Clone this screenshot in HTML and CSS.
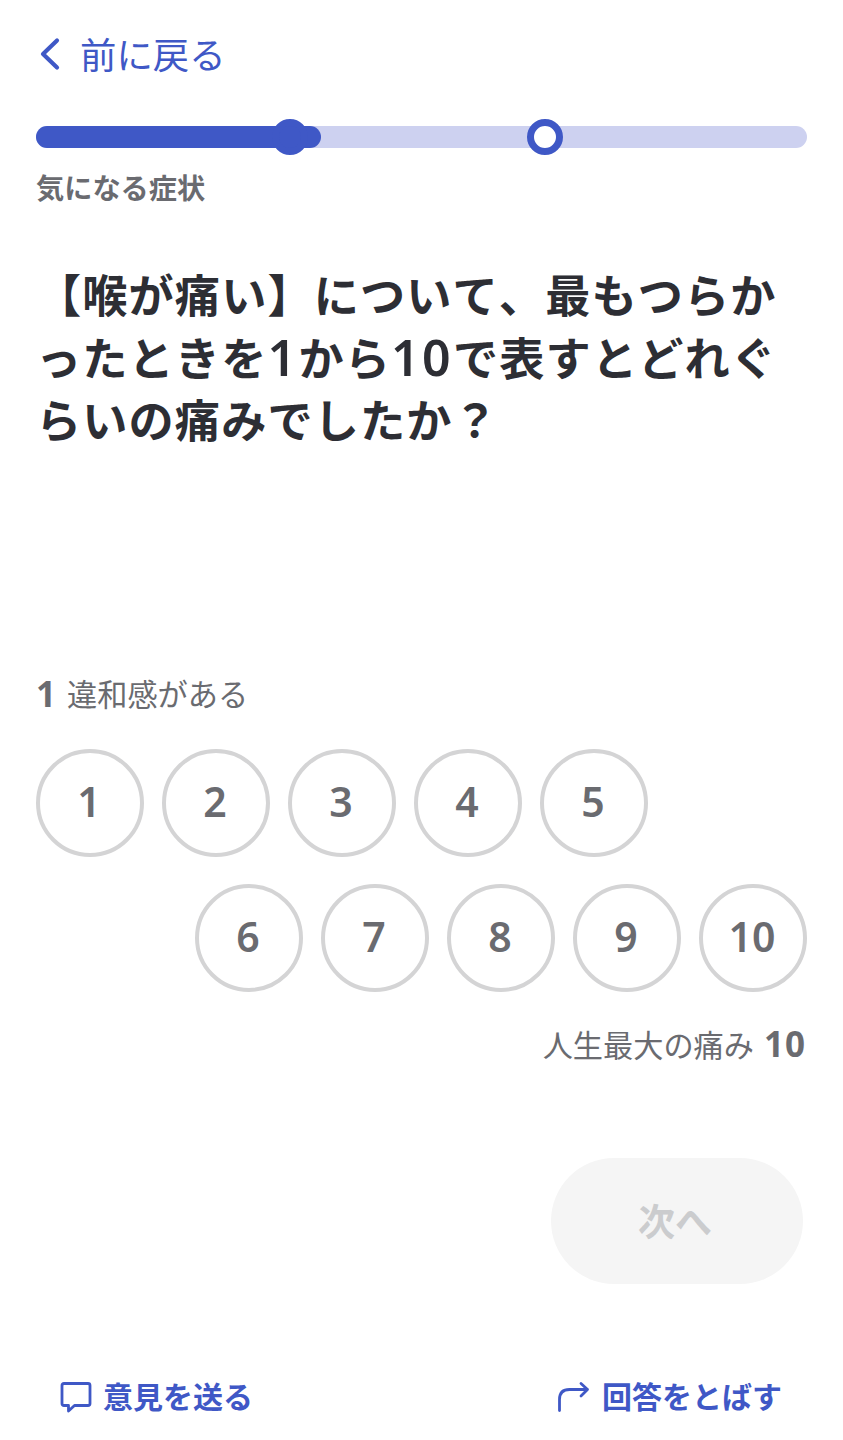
FILE: index.html
```html
<!DOCTYPE html>
<html lang="ja">
<head>
  <meta charset="UTF-8">
  <meta name="viewport" content="width=device-width, initial-scale=1.0">
  <title>気になる症状</title>
  <link rel="stylesheet" href="styles.css">
</head>
<body>
  <header>
    <a class="back-link">
      <svg width="20" height="34" viewBox="0 0 20 34" fill="none" stroke="currentColor" stroke-width="4.2" stroke-linecap="round" stroke-linejoin="round">
        <path d="M17 3.5 L3 17 L17 30.5"/>
      </svg>
      <span>前に戻る</span>
    </a>
    <div class="progress">
      <div class="progress-bar"></div>
      <span class="step step-done"></span>
      <span class="step step-next"></span>
    </div>
    <p class="section-name">気になる症状</p>
  </header>

  <main>
    <h1 class="question">【喉が痛い】について、最もつらか<br>ったときを<span class="num">1</span>から<span class="num">10</span>で表すとどれぐ<br>らいの痛みでしたか？</h1>

    <div class="scale">
      <p class="scale-label"><b>1</b><span>違和感がある</span></p>
      <div class="scale-row">
        <button class="scale-button">1</button>
        <button class="scale-button">2</button>
        <button class="scale-button">3</button>
        <button class="scale-button">4</button>
        <button class="scale-button">5</button>
      </div>
      <div class="scale-row row-right">
        <button class="scale-button">6</button>
        <button class="scale-button">7</button>
        <button class="scale-button">8</button>
        <button class="scale-button">9</button>
        <button class="scale-button">10</button>
      </div>
      <p class="scale-label label-right"><span>人生最大の痛み</span><b>10</b></p>
    </div>

    <button class="next-button" disabled>次へ</button>
  </main>

  <footer>
    <a class="footer-link">
      <svg width="32" height="32" viewBox="0 0 32 32" fill="none" stroke="currentColor" stroke-width="2.8" stroke-linecap="round" stroke-linejoin="round">
        <path d="M4 2.5 H28 Q30 2.5 30 4.5 V22.5 Q30 24.5 28 24.5 H14.5 L8.5 30 V24.5 H4 Q2 24.5 2 22.5 V4.5 Q2 2.5 4 2.5 Z"/>
      </svg>
      <span>意見を送る</span>
    </a>
    <a class="footer-link">
      <svg width="34" height="32" viewBox="0 0 34 32" fill="none" stroke="currentColor" stroke-width="2.8" stroke-linecap="round" stroke-linejoin="round">
        <path d="M2.5 29.5 V18.5 Q2.5 8.5 12.5 8.5 H30.5 M24 2.5 L30.5 8.5 L24 15"/>
      </svg>
      <span>回答をとばす</span>
    </a>
  </footer>
</body>
</html>
```
FILE: styles.css
```css
* {
  box-sizing: border-box;
}
body {
  margin: 0;
  padding: 0 36px;
  height: 1440px;
  background-color: #fff;
  color: #6a6b70;
  font-family: "Noto Sans", "Noto Sans CJK JP", sans-serif;
}
p, h1 {
  margin: 0;
}
button {
  font-family: inherit;
}
.back-link {
  display: flex;
  align-items: center;
  gap: 20px;
  height: 36px;
  margin-top: 36px;
  padding-left: 4px;
  color: #3f58c6;
  font-size: 36.4px;
  line-height: 36px;
}
.back-link span {
  padding-top: 1px;
}
header {
  display: flow-root;
}
.progress {
  position: relative;
  height: 22px;
  margin-top: 54px;
  border-radius: 11px;
  background-color: #cdd1f0;
}
.progress-bar {
  width: 37%;
  height: 100%;
  border-radius: 11px;
  background-color: #3f58c6;
}
.step {
  position: absolute;
  top: -7px;
  width: 36px;
  height: 36px;
  border: 7px solid #3f58c6;
  border-radius: 50%;
  background-color: #fff;
}
.step-done {
  left: 236px;
  background-color: #3f58c6;
}
.step-next {
  left: 491px;
}
.section-name {
  margin-top: 24px;
  font-size: 28.2px;
  font-weight: bold;
  line-height: 32px;
}
.question {
  height: 188px;
  margin-top: 61px;
  color: #2d2e34;
  font-size: 45.2px;
  font-weight: bold;
  line-height: 62.5px;
  letter-spacing: 1.1px;
  font-kerning: none;
  white-space: nowrap;
}
.question .num {
  font-size: 50px;
  font-weight: 600;
  line-height: 50px;
  letter-spacing: 2.4px;
}
.scale {
  margin-top: 222px;
}
.scale-label {
  display: flex;
  align-items: center;
  gap: 10px;
  height: 40px;
  font-size: 30.2px;
  line-height: 40px;
}
.scale-label b {
  padding-bottom: 3px;
  font-size: 35px;
  letter-spacing: 1px;
}
.label-right {
  justify-content: flex-end;
  margin-top: 34px;
  padding-right: 1px;
}
.scale-row {
  display: flex;
  gap: 18px;
  margin-top: 33.5px;
}
.row-right {
  justify-content: flex-end;
  margin-top: 27px;
}
.scale-button {
  width: 108px;
  height: 108px;
  padding: 0 2px 3px 0;
  border: 4px solid #d4d4d5;
  border-radius: 50%;
  background-color: #fff;
  color: #6a6b70;
  font-size: 41px;
  font-weight: 600;
}
.next-button {
  display: block;
  width: 252px;
  height: 126px;
  margin: 92.5px 4px 0 auto;
  padding: 0 4px 2px 0;
  border: none;
  border-radius: 63px;
  background-color: #f5f5f5;
  color: #cbccce;
  font-size: 37px;
  font-weight: bold;
}
footer {
  display: flex;
  justify-content: space-between;
  margin-top: 93px;
  padding: 0 25px 0 24px;
}
.footer-link {
  display: flex;
  align-items: center;
  gap: 11px;
  color: #3f58c6;
  font-size: 30px;
  font-weight: bold;
  line-height: 40px;
}
```
